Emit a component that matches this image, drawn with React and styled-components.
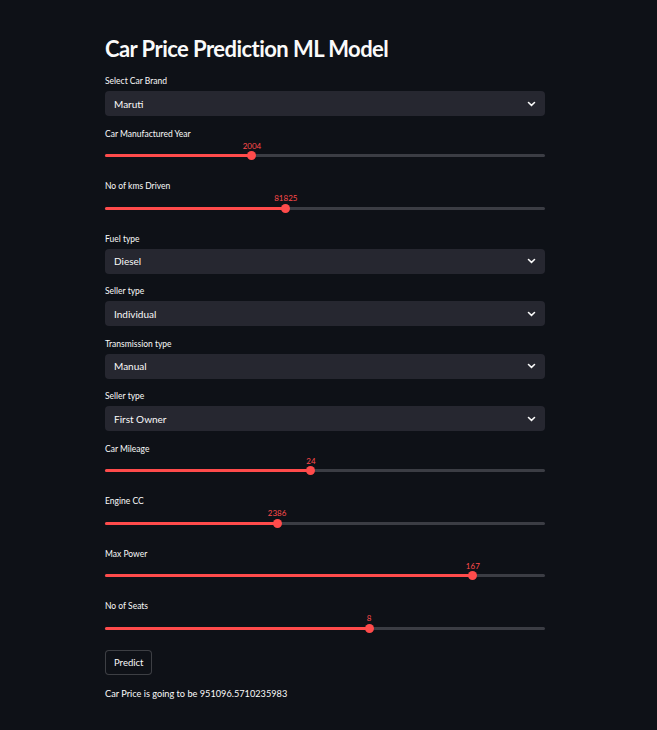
import React from "react";
import styled, { createGlobalStyle } from "styled-components";

const Global = createGlobalStyle`
  html, body {
    margin: 0;
    padding: 0;
    background: #0e1117;
  }
  body {
    font-family: "Source Sans Pro", Lato, "Noto Sans", sans-serif;
    color: #fafafa;
  }
`;

const Page = styled.main`
  min-height: 730px;
  background: #0e1117;
  padding: 36px 0 0 105px;
  box-sizing: border-box;
`;

const Column = styled.section`
  width: 440px;
  display: flex;
  flex-direction: column;
`;

const Title = styled.h1`
  margin: 0 0 13px;
  font-size: 22px;
  line-height: 26px;
  font-weight: 700;
  color: #fafafa;
  letter-spacing: -0.55px;
`;

const Widget = styled.div`
  display: flex;
  flex-direction: column;
  margin-bottom: 11.5px;
`;

const Label = styled.label`
  font-size: 8.5px;
  line-height: 12px;
  height: 12px;
  margin-bottom: ${(p) => (p.$select ? 4 : 0)}px;
  color: #fafafa;
`;

const SelectBox = styled.div`
  height: 25px;
  border-radius: 4px;
  background: #262730;
  display: flex;
  align-items: center;
  justify-content: space-between;
  padding: 0 9px;
  box-sizing: border-box;
  font-size: 10px;
  color: #fafafa;
`;

const SliderArea = styled.div`
  position: relative;
  height: 29px;
`;

const Track = styled.div`
  position: absolute;
  left: 0;
  right: 0;
  top: 14.5px;
  height: 3px;
  border-radius: 2px;
  background: #3b3d44;
`;

const Fill = styled.div`
  height: 100%;
  border-radius: 2px;
  background: #ff4b4b;
`;

const Thumb = styled.div`
  position: absolute;
  top: 11.5px;
  width: 9px;
  height: 9px;
  margin-left: -4.5px;
  border-radius: 50%;
  background: #ff4b4b;
`;

const Value = styled.span`
  position: absolute;
  top: 0;
  transform: translateX(-50%);
  font-size: 8px;
  line-height: 12px;
  color: #ff4b4b;
  white-space: nowrap;
`;

const Button = styled.button`
  align-self: flex-start;
  margin-top: -3px;
  height: 25px;
  padding: 0 8px;
  border: 1px solid rgba(250, 250, 250, 0.2);
  border-radius: 4px;
  background: #0e1117;
  color: #fafafa;
  font-family: inherit;
  font-size: 9.5px;
  cursor: pointer;
`;

const Result = styled.p`
  margin: 12px 0 0;
  font-size: 9.2px;
  line-height: 14px;
  color: #fafafa;
`;

const Chevron = () => (
  <svg width="9" height="6" viewBox="0 0 9 6">
    <polyline points="1.5,1.5 4.5,4.3 7.5,1.5" fill="none" stroke="#fafafa" strokeWidth="1.6" strokeLinecap="round" />
  </svg>
);

const Select = ({ label, value }) => (
  <Widget>
    <Label $select>{label}</Label>
    <SelectBox>
      <span>{value}</span>
      <Chevron />
    </SelectBox>
  </Widget>
);

const Slider = ({ label, value, pct }) => (
  <Widget>
    <Label>{label}</Label>
    <SliderArea>
      <Value style={{ left: `${pct}%` }}>{value}</Value>
      <Track>
        <Fill style={{ width: `${pct}%` }} />
      </Track>
      <Thumb style={{ left: `${pct}%` }} />
    </SliderArea>
  </Widget>
);

export default function App() {
  return (
    <>
      <Global />
      <Page>
        <Column>
          <Title>Car Price Prediction ML Model</Title>
          <Select label="Select Car Brand" value="Maruti" />
          <Slider label="Car Manufactured Year" value="2004" pct={33.4} />
          <Slider label="No of kms Driven" value="81825" pct={41.1} />
          <Select label="Fuel type" value="Diesel" />
          <Select label="Seller type" value="Individual" />
          <Select label="Transmission type" value="Manual" />
          <Select label="Seller type" value="First Owner" />
          <Slider label="Car Mileage" value="24" pct={46.8} />
          <Slider label="Engine CC" value="2386" pct={39.1} />
          <Slider label="Max Power" value="167" pct={83.6} />
          <Slider label="No of Seats" value="8" pct={60} />
          <Button>Predict</Button>
          <Result>Car Price is going to be 951096.5710235983</Result>
        </Column>
      </Page>
    </>
  );
}
